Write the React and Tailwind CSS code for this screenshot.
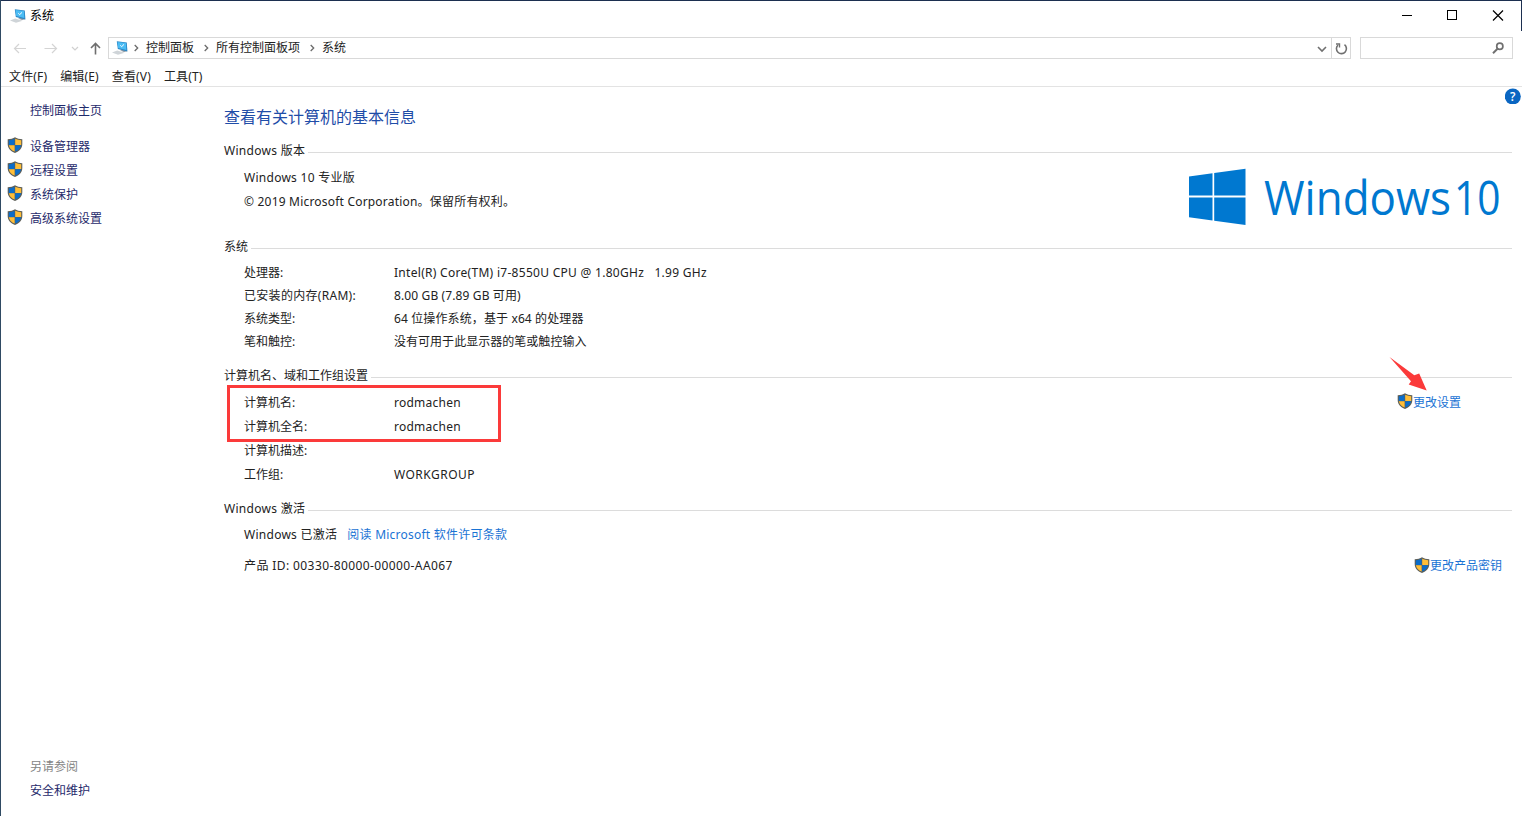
import React from "react";

const tasks = ["设备管理器", "远程设置", "系统保护", "高级系统设置"];
const menus = ["文件(F)", "编辑(E)", "查看(V)", "工具(T)"];
const crumbs = ["控制面板", "所有控制面板项", "系统"];

const systemRows = [
  ["处理器:", "Intel(R) Core(TM) i7-8550U CPU @ 1.80GHz\u00a0\u00a0 1.99 GHz", "tracking-[0.29px]"],
  ["已安装的内存(RAM):", "8.00 GB (7.89 GB 可用)", "tracking-[0.12px]"],
  ["系统类型:", "64 位操作系统，基于 x64 的处理器", "tracking-[0.12px]"],
  ["笔和触控:", "没有可用于此显示器的笔或触控输入", "tracking-[0.03px]"],
];

const nameRows = [
  ["计算机名:", "rodmachen", "tracking-[0.25px]"],
  ["计算机全名:", "rodmachen", "tracking-[0.25px]"],
  ["计算机描述:", "", ""],
  ["工作组:", "WORKGROUP", "tracking-[0.48px]"],
];

function Shield() {
  return (
    <svg className="h-4 w-4 shrink-0" viewBox="0 0 16 16">
      <path d="M8 .3C6.2 1.6 3.6 2.2.7 2.2V7c0 4.300 2.900 7.200 7.300 8.900 4.400-1.700 7.300-4.600 7.300-8.900V2.200C12.400 2.200 9.800 1.600 8 .3z" fill="#5d5f58" />
      <path d="M7.600 1.800C6 2.700 4 3.200 1.800 3.300V8h5.800z" fill="#0b6cc9" />
      <path d="M8.200 1.800C10 2.700 12 3.200 14.200 3.300V8h-6z" fill="#ffbe38" />
      <path d="M1.900 8.200h5.700v6.400C4.300 13.200 2.300 11.200 1.900 8.200z" fill="#ffbe38" />
      <path d="M8.200 8.200h5.900c-.4 3-2.500 5-5.900 6.400z" fill="#0b6cc9" />
    </svg>
  );
}

function PcIcon() {
  return (
    <svg className="h-4 w-4 shrink-0" viewBox="0 0 16 16">
      <path d="M0 12.600l5.200-2.200 7.500 2.300-6.700 2z" fill="#cfd4d8" />
      <path d="M8 10.500l4 1.400 3.200-.6-1-2z" fill="#8d98a3" />
      <path d="M4.800 1.200l10 1.300.6 9-9.600-2.400z" fill="#2b86c4" />
      <path d="M5.500 2l8.400 1.100.5 7-8.200-2z" fill="#4bbcf4" />
      <path d="M8.300 5.300l1.300 1.400 2.400-2.300" fill="none" stroke="#fff" strokeWidth="1" />
    </svg>
  );
}

function Chevron() {
  return (
    <svg className="h-2 w-[5px] shrink-0" viewBox="0 0 5 8">
      <path d="M.7 1l3 3-3 3" fill="none" stroke="#6b6b6b" strokeWidth="1.300" />
    </svg>
  );
}

function TitleBar() {
  return (
    <div className="flex h-[31px] border-t border-r border-[#1c2f50]">
      <div className="flex flex-1 items-center gap-1 pl-[9px] text-black">
        <PcIcon />
        <span>系统</span>
      </div>
      <svg className="h-[30px] w-[138px]" viewBox="0 0 138 30" fill="none" stroke="#000" shapeRendering="crispEdges">
        <path d="M19 14.500h10" />
        <path d="M64.500 9.500h9v9h-9z" />
        <path d="M110 9.500l10 10M120 9.500l-10 10" shapeRendering="auto" strokeWidth="1.200" />
      </svg>
    </div>
  );
}

function AddressBar() {
  return (
    <div className="flex h-[22px] mt-1.5 pl-[11px] pr-[9px]">
      <svg className="h-[22px] w-24 shrink-0" viewBox="0 0 96 22" fill="none">
        <path d="M14 11.500H2.500M7 7l-4.500 4.500L7 16" stroke="#d4d4d4" strokeWidth="1.200" />
        <path d="M32.500 11.500h12M40 7l4.500 4.500L40 16" stroke="#d4d4d4" strokeWidth="1.200" />
        <path d="M60 10l3 3 3-3" stroke="#d0d0d0" strokeWidth="1.200" />
        <path d="M83.500 17.500V6.500M79 11l4.500-4.500L88 11" stroke="#6e6e6e" strokeWidth="1.600" />
      </svg>
      <div className="flex flex-1 items-center border border-[#d9d9d9] text-[#222]">
        <div className="flex flex-1 items-center pl-[3px]">
          <span className="-mr-1"><PcIcon /></span>
          {crumbs.map((c) => (
            <React.Fragment key={c}>
              <span className="ml-[10px] mr-[7px]"><Chevron /></span>
              <span>{c}</span>
            </React.Fragment>
          ))}
        </div>
        <svg className="h-5 w-[18px]" viewBox="0 0 18 20" fill="none">
          <path d="M5 9l4 4 4-4" stroke="#707070" strokeWidth="1.600" />
        </svg>
        <div className="h-full border-l border-[#d9d9d9]">
          <svg className="h-5 w-[18px]" viewBox="0 0 18 20" fill="none" stroke="#707070">
            <path d="M12.500 6.700a5 5 0 1 1-6.500.3" strokeWidth="1.600" />
            <path d="M4 6h3.500v3.500" strokeWidth="1.400" />
          </svg>
        </div>
      </div>
      <div className="ml-[9px] flex w-[153px] items-center justify-end border border-[#d9d9d9] pr-2">
        <svg className="h-3 w-3" viewBox="0 0 12 12" fill="none" stroke="#707070">
          <circle cx="7.800" cy="4.300" r="3.100" strokeWidth="1.700" />
          <path d="M5.500 6.700L1 11.200" strokeWidth="2" />
        </svg>
      </div>
    </div>
  );
}

function Section({ title, spacing = "" }) {
  return (
    <div className="flex h-6 items-center">
      <span className={`whitespace-nowrap pt-0.5 ${spacing}`}>{title}</span>
      <span className="ml-[3px] mt-[5px] h-px flex-1 bg-[#dcdcdc]" />
    </div>
  );
}

function Logo() {
  return (
    <svg className="h-[72px] w-[324px]" viewBox="0 -6 324 72" fill="#0078d0">
      <path d="M1 8.600l23.500-3.300v22.300H1zM26.200 5L57.500.8v26.800H26.200zM1 29.600h23.500v23L1 49.200zM26.200 29.600h31.300v27.500l-31.300-4.300z" />
      <text x="76" y="46.500" textLength="187" lengthAdjust="spacingAndGlyphs" className="font-['Open_Sans'] text-[47px] font-normal">Windows</text>
      <text x="266" y="46.500" textLength="46.500" lengthAdjust="spacingAndGlyphs" className="font-['Open_Sans'] text-[47px] font-normal">10</text>
    </svg>
  );
}

function Sidebar() {
  return (
    <div className="flex w-[223px] flex-col pl-1.5 text-[#1f2a6b]">
      <div className="mt-[12px] flex h-6 items-center pl-[23px]">控制面板主页</div>
      <div className="mt-[11px]">
        {tasks.map((t) => (
          <div key={t} className="flex h-6 items-center gap-[7px]">
            <span className="-mt-0.5"><Shield /></span>
            <span className="pt-0.5">{t}</span>
          </div>
        ))}
      </div>
      <div className="mt-auto mb-[13px] pl-[23px]">
        <div className="flex h-6 items-center text-[#848484]">另请参阅</div>
        <div className="flex h-6 items-center">安全和维护</div>
      </div>
    </div>
  );
}

function Content() {
  return (
    <div className="relative flex-1 pr-[10px] text-[#222]">
      <svg className="absolute top-[1px] right-[1px] h-4 w-4" viewBox="0 0 16 16">
        <circle cx="7.800" cy="8.500" r="8" fill="#0a66c2" />
        <text x="7.800" y="13" textAnchor="middle" fill="#fff" className="font-['Open_Sans'] text-[12px] font-semibold">?</text>
      </svg>
      <h1 className="mt-[18px] mb-[9px] h-6 text-[16px] leading-6 text-[#1f4da8]">查看有关计算机的基本信息</h1>

      <Section title="Windows 版本" spacing="tracking-[0.3px]" />
      <div className="mt-[3px] flex h-[69px] justify-between pl-5">
        <div className="pt-px leading-6">
          <p className="tracking-[0.27px]">Windows 10 专业版</p>
          <p className="tracking-[0.2px]">© 2019 Microsoft Corporation。保留所有权利。</p>
        </div>
        <div className="-mt-[3px]"><Logo /></div>
      </div>

      <Section title="系统" />
      <div className="mt-[3px] mb-[10px] pl-5">
        {systemRows.map(([k, v, spacing]) => (
          <div key={k} className="flex leading-[23px]">
            <span className={k.includes("RAM") ? "w-[150px] tracking-[0.3px]" : "w-[150px]"}>{k}</span>
            <span className={spacing}>{v}</span>
          </div>
        ))}
      </div>

      <Section title="计算机名、域和工作组设置" />
      <div className="relative mt-1 mb-[9px] flex justify-between pl-5 pr-[51px]">
        <div className="absolute -top-[6px] left-[3px] h-[57px] w-[274px] border-3 border-[#fb3a3a]" />
        <svg className="absolute -top-[35px] right-[84px] h-9 w-10" viewBox="0 0 40 36">
          <path d="M1.500 1L26.300 19.300 31.200 17.600 38.700 34.500 20.700 28.500 23 25.300z" fill="#fb3a3a" />
        </svg>
        <div>
          {nameRows.map(([k, v, spacing]) => (
            <div key={k} className="flex h-6 leading-6">
              <span className="w-[150px]">{k}</span>
              <span className={spacing}>{v}</span>
            </div>
          ))}
        </div>
        <a className="flex h-6 items-center text-[#1a73d4]">
          <span className="-mt-1"><Shield /></span>
          更改设置
        </a>
      </div>

      <Section title="Windows 激活" spacing="tracking-[0.3px]" />
      <div className="mt-[3px] pl-5">
        <div className="flex h-6 items-center gap-[10px]">
          <span className="tracking-[0.27px]">Windows 已激活</span>
          <a className="tracking-[0.23px] text-[#1a73d4]">阅读 Microsoft 软件许可条款</a>
        </div>
        <div className="mt-[7px] flex h-6 items-center justify-between pr-[10px]">
          <span className="tracking-[0.4px]">产品 ID: 00330-80000-00000-AA067</span>
          <a className="flex items-center text-[#1a73d4]">
            <span className="-mt-0.5"><Shield /></span>
            更改产品密钥
          </a>
        </div>
      </div>
    </div>
  );
}

export default function App() {
  return (
    <div className="flex h-screen w-screen flex-col overflow-hidden border-l border-[#2f4a63] bg-white font-['Noto_Sans','Noto_Sans_CJK_SC',sans-serif] text-[12px] leading-6">
      <TitleBar />
      <AddressBar />
      <div className="flex h-[28px] items-end gap-[13px] border-b border-[#e3e3e3] pl-2 text-[#222] tracking-[0.15px]">
        {menus.map((m) => (
          <span key={m} className="h-[21px]">{m}</span>
        ))}
      </div>
      <div className="flex flex-1">
        <Sidebar />
        <Content />
      </div>
    </div>
  );
}
